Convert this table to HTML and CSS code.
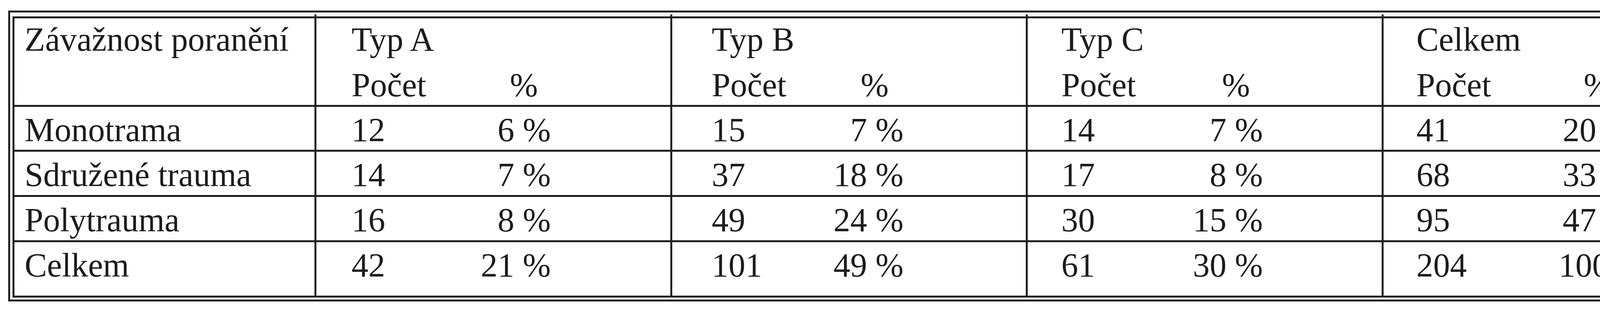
FILE: index.html
```html
<!DOCTYPE html>
<html lang="cs">
<head>
<meta charset="utf-8">
<title>Závažnost poranění</title>
<link rel="stylesheet" href="styles.css">
</head>
<body>
<div class="frame">
  <div class="tbl" role="table">
    <div class="cell lab head" role="columnheader">Závažnost poranění</div>
    <div class="cell grp head g2" role="columnheader"><div class="ttl">Typ A</div><div class="ln"><span>Počet</span><span class="pct hp">%</span></div></div>
    <div class="cell grp head g3" role="columnheader"><div class="ttl">Typ B</div><div class="ln"><span>Počet</span><span class="pct hp">%</span></div></div>
    <div class="cell grp head g4" role="columnheader"><div class="ttl">Typ C</div><div class="ln"><span>Počet</span><span class="pct hp">%</span></div></div>
    <div class="cell grp head g5" role="columnheader"><div class="ttl">Celkem</div><div class="ln"><span>Počet</span><span class="pct hp">%</span></div></div>

    <div class="cell lab">Monotrama</div>
    <div class="cell grp g2"><div class="ln"><span>12</span><span class="pct">6 %</span></div></div>
    <div class="cell grp g3"><div class="ln"><span>15</span><span class="pct">7 %</span></div></div>
    <div class="cell grp g4"><div class="ln"><span>14</span><span class="pct">7 %</span></div></div>
    <div class="cell grp g5"><div class="ln"><span>41</span><span class="pct">20 %</span></div></div>

    <div class="cell lab">Sdružené trauma</div>
    <div class="cell grp g2"><div class="ln"><span>14</span><span class="pct">7 %</span></div></div>
    <div class="cell grp g3"><div class="ln"><span>37</span><span class="pct">18 %</span></div></div>
    <div class="cell grp g4"><div class="ln"><span>17</span><span class="pct">8 %</span></div></div>
    <div class="cell grp g5"><div class="ln"><span>68</span><span class="pct">33 %</span></div></div>

    <div class="cell lab">Polytrauma</div>
    <div class="cell grp g2"><div class="ln"><span>16</span><span class="pct">8 %</span></div></div>
    <div class="cell grp g3"><div class="ln"><span>49</span><span class="pct">24 %</span></div></div>
    <div class="cell grp g4"><div class="ln"><span>30</span><span class="pct">15 %</span></div></div>
    <div class="cell grp g5"><div class="ln"><span>95</span><span class="pct">47 %</span></div></div>

    <div class="cell lab">Celkem</div>
    <div class="cell grp g2"><div class="ln"><span>42</span><span class="pct">21 %</span></div></div>
    <div class="cell grp g3"><div class="ln"><span>101</span><span class="pct">49 %</span></div></div>
    <div class="cell grp g4"><div class="ln"><span>61</span><span class="pct">30 %</span></div></div>
    <div class="cell grp g5"><div class="ln"><span>204</span><span class="pct">100 %</span></div></div>
  </div>
</div>
</body>
</html>
```

FILE: styles.css
```css
html, body {
  margin: 0;
  padding: 0;
  background: #ffffff;
}

body {
  font-family: "Liberation Serif", "Times New Roman", serif;
  font-size: 86px;
  color: #1c1c1c;
}

.frame {
  width: 4489px;
  margin: 27px 0 0 21px;
  border: 5px solid #231f20;
  padding: 10px 5px 5px 6px;
}

.tbl {
  display: grid;
  grid-template-columns: 768px 906px 905px 906px 974px;
  grid-template-rows: 222px 110px 111px 111px 137px;
  gap: 5px;
  border: 5px solid #231f20;
  background: #231f20;
}

.cell {
  background: #ffffff;
  line-height: 100px;
  padding-top: 9px;
  white-space: nowrap;
}

.cell.head {
  padding-top: 4px;
}

.lab {
  padding-left: 26px;
}

.grp {
  position: relative;
  padding-left: var(--pl);
}

.head.grp::before {
  content: "";
  position: absolute;
  left: -5px;
  top: -10px;
  width: 5px;
  height: 5px;
  background: #231f20;
}

.ttl {
  margin-bottom: 17px;
}

.ln {
  display: grid;
  grid-template-columns: var(--a) var(--b);
}

.pct {
  text-align: var(--al);
}

.pct.hp {
  padding-right: var(--hpad);
}

.g2 { --pl: 90px; --a: 260px; --b: 250px; --al: right; --hpad: 33px; }
.g3 { --pl: 101px; --a: 241px; --b: 250px; --al: right; --hpad: 38px; }
.g4 { --pl: 86px; --a: 266px; --b: 250px; --al: right; --hpad: 33px; }
.g5 { --pl: 84px; --a: 364px; --b: 200px; --al: center; --hpad: 0px; }
```
